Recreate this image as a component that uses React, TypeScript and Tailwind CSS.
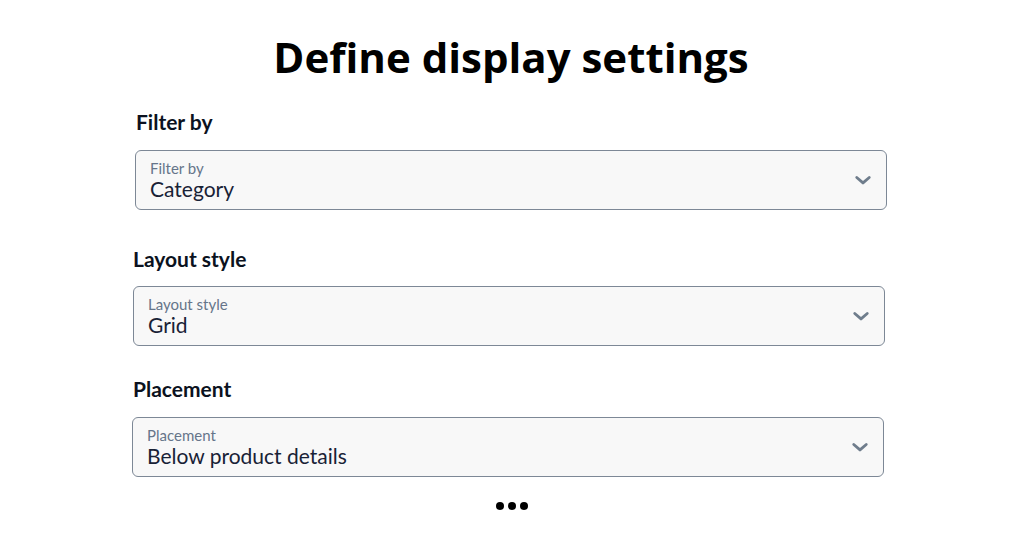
import React from 'react';

interface SelectFieldProps {
    label: string;
    value: string;
    offset?: string;
    labelGap: string;
    topGap: string;
}

const Chevron: React.FC = () => (
    <svg className="w-[20px] h-[20px] text-[#6f7d8c]" viewBox="0 0 24 24" fill="none" stroke="currentColor">
        <path strokeLinecap="round" strokeLinejoin="round" strokeWidth={3.4} d="M4.5 9l7.5 6.5 7.5-6.5" />
    </svg>
);

const SelectField: React.FC<SelectFieldProps> = ({ label, value, offset = '', labelGap, topGap }) => {
    return (
        <section className={`${offset} ${topGap} w-[752px]`}>
            <h2 className={`text-[21px] leading-[28px] font-bold text-[#0b1220] ${labelGap}`}>{label}</h2>
            <div className="h-[60px] rounded-[6px] border border-[#7d8896] bg-[#f8f8f8] flex items-center justify-between pl-[14px] pr-[13px]">
                <div className="flex flex-col">
                    <span className="text-[15px] leading-[17px] text-[#66758a]">{label}</span>
                    <span className="text-[21px] leading-[24px] text-[#182236]">{value}</span>
                </div>
                <Chevron />
            </div>
        </section>
    );
};

const App: React.FC = () => {
    return (
        <div className="w-[1024px] h-[538px] bg-white overflow-hidden flex flex-col pt-[29px] font-['Lato','Liberation_Sans',sans-serif]">
            <h1 className="self-center -ml-[2px] text-[42px] leading-[56px] font-bold text-black font-['Open_Sans','Liberation_Sans',sans-serif]">
                Define display settings
            </h1>
            <div className="ml-[133px] w-[752px] flex flex-col">
                <SelectField label="Filter by" value="Category" offset="ml-[2px] [&>h2]:ml-[1px]" topGap="mt-[23px]" labelGap="mb-[14px]" />
                <SelectField label="Layout style" value="Grid" topGap="mt-[35px]" labelGap="mb-[13px]" />
                <SelectField label="Placement" value="Below product details" offset="-ml-[1px] [&>h2]:ml-[1px]" topGap="mt-[29px]" labelGap="mb-[14px]" />
            </div>
            <div className="self-center mt-[25px] flex items-center gap-[4px]">
                <span className="w-[8px] h-[8px] rounded-full bg-black" />
                <span className="w-[8px] h-[8px] rounded-full bg-black" />
                <span className="w-[8px] h-[8px] rounded-full bg-black" />
            </div>
        </div>
    );
};

export default App;
